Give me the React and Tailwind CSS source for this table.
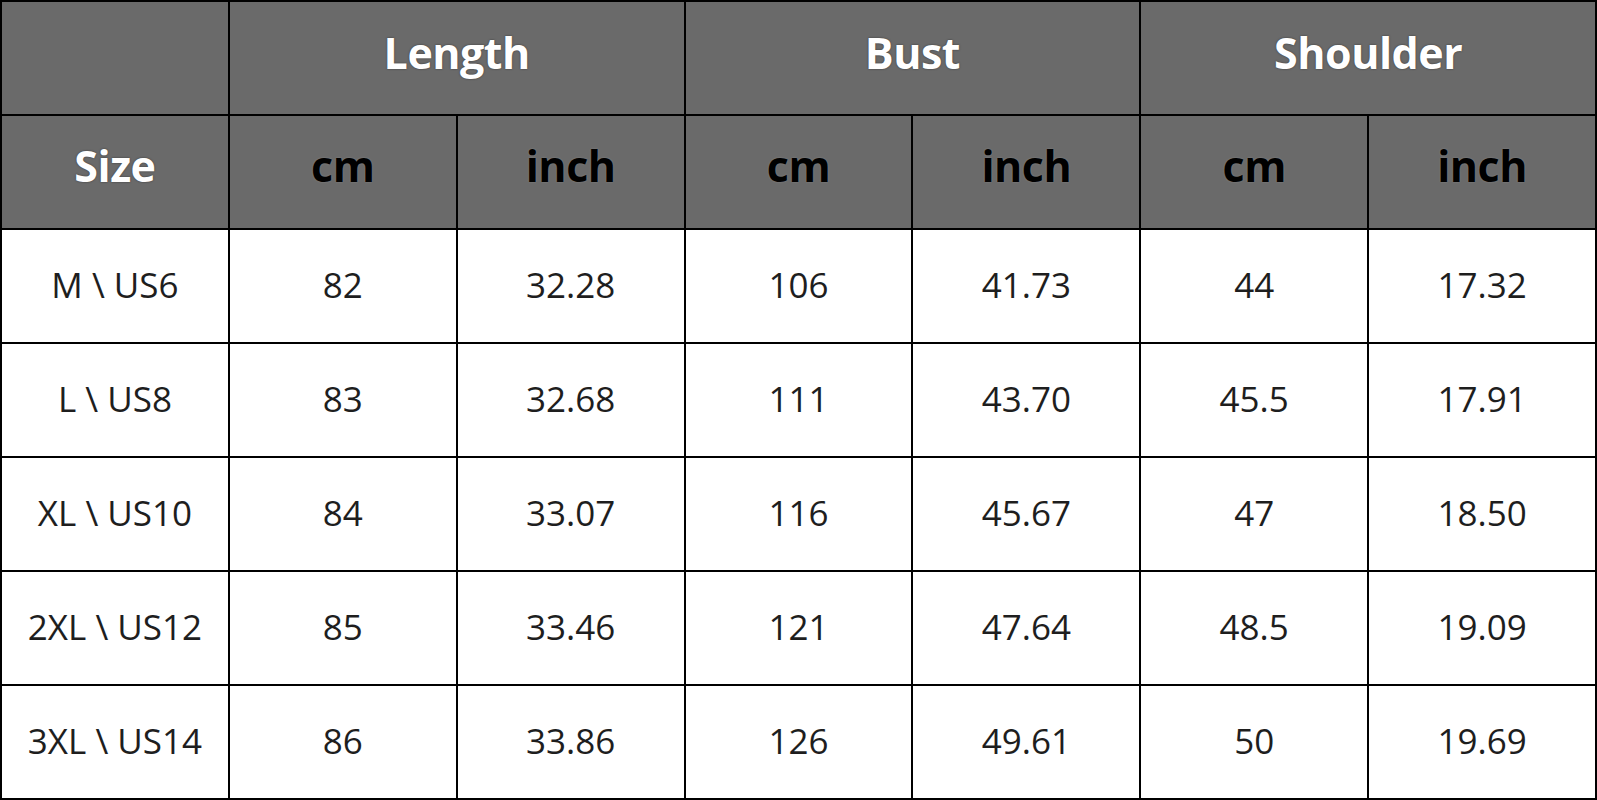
const rows = [
  ['M \\ US6', '82', '32.28', '106', '41.73', '44', '17.32'],
  ['L \\ US8', '83', '32.68', '111', '43.70', '45.5', '17.91'],
  ['XL \\ US10', '84', '33.07', '116', '45.67', '47', '18.50'],
  ['2XL \\ US12', '85', '33.46', '121', '47.64', '48.5', '19.09'],
  ['3XL \\ US14', '86', '33.86', '126', '49.61', '50', '19.69'],
];

const groups = ['Length', 'Bust', 'Shoulder'];

export default function App() {
  return (
    <div className="w-[1597px] h-[800px] bg-black p-[2px] font-['Open_Sans',sans-serif]">
      <div className="grid h-full grid-cols-7 grid-rows-7 gap-[2px]">
        <div className="bg-[#6a6a6a]" />
        {groups.map((g) => (
          <div
            key={g}
            className="col-span-2 bg-[#6a6a6a] flex items-center justify-center text-[43px] font-bold tracking-[-0.5px] text-white [text-shadow:0_0_2px_#333] pb-[10px]"
          >
            {g}
          </div>
        ))}

        <div className="bg-[#6a6a6a] flex items-center justify-center text-[43px] font-bold tracking-[-0.5px] text-white [text-shadow:0_0_2px_#333] pb-[12px]">
          Size
        </div>
        {groups.map((g) => (
          <>
            <div
              key={g + 'cm'}
              className="bg-[#6a6a6a] flex items-center justify-center text-[43px] font-bold tracking-[-0.5px] text-black [text-shadow:0_0_2px_#888] pb-[12px]"
            >
              cm
            </div>
            <div
              key={g + 'inch'}
              className="bg-[#6a6a6a] flex items-center justify-center text-[43px] font-bold tracking-[-0.5px] text-black [text-shadow:0_0_2px_#888] pb-[12px]"
            >
              inch
            </div>
          </>
        ))}

        {rows.map((row) =>
          row.map((cell, i) => (
            <div
              key={row[0] + i}
              className="bg-white flex items-center justify-center text-[35px] text-[#1e1e1e] pb-[2px]"
            >
              {cell}
            </div>
          ))
        )}
      </div>
    </div>
  );
}
